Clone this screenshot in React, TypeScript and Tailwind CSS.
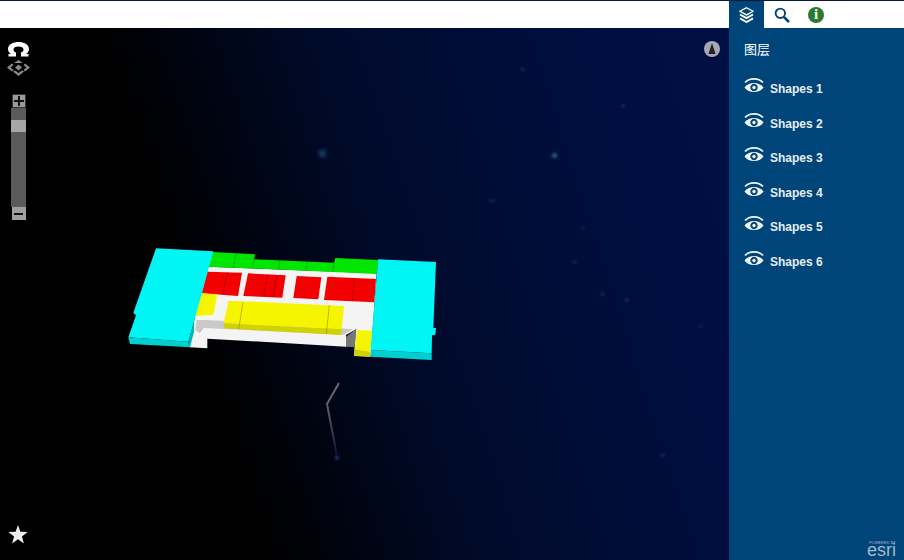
const layers = ["Shapes 1", "Shapes 2", "Shapes 3", "Shapes 4", "Shapes 5", "Shapes 6"];

function EyeIcon() {
  return (
    <svg width="20" height="15" viewBox="0 0 20 15" className="shrink-0">
      <path d="M1 4.500C5.500 -.3 14.500 -.3 19 4.500" fill="none" stroke="#f4f7fa" strokeWidth="1.600" />
      <path
        fillRule="evenodd"
        fill="#f4f7fa"
        d="M.5 9.500C4.500 3.500 15.500 3.500 19.500 9.500C15.500 15.500 4.500 15.500 .5 9.500ZM10 5.800a3.700 3.700 0 1 0 .01 0ZM10 7.800a1.700 1.700 0 1 1-.01 0Z"
      />
    </svg>
  );
}

function LayersIcon() {
  return (
    <svg width="15" height="16" viewBox="0 0 15 16">
      <path d="M7.500 .7 14 4.300 7.500 7.900 1 4.300Z" fill="none" stroke="#fff" strokeWidth="1.300" />
      <path d="M1 7.500 7.500 11.200 14 7.500" fill="none" stroke="#fff" strokeWidth="1.900" />
      <path d="M1 11.300 7.500 15 14 11.300" fill="none" stroke="#fff" strokeWidth="1.900" />
    </svg>
  );
}

function SearchIcon() {
  return (
    <svg width="16" height="16" viewBox="0 0 16 16">
      <circle cx="6.300" cy="6.300" r="4.700" fill="none" stroke="#00457a" strokeWidth="1.900" />
      <path d="M9.800 9.800 15 15" stroke="#00457a" strokeWidth="2.600" />
    </svg>
  );
}

function Building() {
  return (
    <svg width="330" height="130" viewBox="0 0 990 390" className="absolute left-[120px] top-[212px]">
      {/* floor slab */}
      <path d="M262 80 770 100 752 350 702 348 708 268 678 285 678 320 262 296 262 325 208 322 225 230 245 100Z" fill="#f4f4f4" />
      <path d="M250 240 320 243 700 268 670 284 250 264 240 280 226 270 230 240Z" fill="#c9c9c9" />
      <path d="M678 290 708 268 704 322 678 320Z" fill="#777" />
      {/* green row */}
      <path d="M278 36 405 43 402 58 642 68 646 54 774 60 770 102 640 96 264 80Z" fill="#00e600" />
      <path d="M348 40 340 82M405 43 397 84M480 62 476 88M562 66 558 92M642 68 638 96" stroke="#0a7a0a" strokeWidth="1.500" fill="none" />
      {/* red blocks */}
      <path d="M262 95 366 98 354 168 245 160Z" fill="#f30000" />
      <path d="M322 97 308 165" stroke="#8a0000" strokeWidth="1.500" />
      <path d="M384 100 497 106 487 173 370 168Z" fill="#f30000" />
      <path d="M443 104 431 170M470 106 460 172" stroke="#8a0000" strokeWidth="1.500" />
      <path d="M530 108 604 112 595 178 520 174Z" fill="#f30000" />
      <path d="M622 110 768 117 763 187 612 180Z" fill="#f30000" />
      <path d="M704 114 697 184" stroke="#8a0000" strokeWidth="1.500" />
      {/* yellow blocks */}
      <path d="M243 160 292 163 280 224 226 228Z" fill="#f5f500" />
      <path d="M326 182 672 198 665 268 311 250Z" fill="#f5f500" />
      <path d="M311 250 665 268 664 285 312 265Z" fill="#d2d200" />
      <path d="M369 186 356 268M628 196 619 282" stroke="#7a7a00" strokeWidth="1.500" fill="none" />
      <path d="M712 270 756 272 751 335 704 328Z" fill="#f5f500" />
      <path d="M704 328 751 335 751 350 702 347Z" fill="#d2d200" />
      {/* cyan wings */}
      <path d="M108 25 280 34 222 245 205 305 25 292 48 226 40 218Z" fill="#00f5f5" />
      <path d="M25 292 205 305 210 322 30 312Z" fill="#00cfcf" />
      <path d="M205 305 222 245 222 275 210 322Z" fill="#00b5b5" />
      <path d="M774 58 948 66 940 264 948 264 946 284 936 286 935 340 752 330Z" fill="#00f5f5" />
      <path d="M752 330 935 340 935 360 752 350Z" fill="#00cfcf" />
    </svg>
  );
}

export default function App() {
  return (
    <div className="flex h-[560px] w-[904px] flex-col overflow-hidden bg-black font-['Liberation_Sans',sans-serif]">
      <div className="flex h-[28px] shrink-0 border-t border-[#0a1a30] bg-white">
        <div className="flex-1" />
        <div className="flex w-[175px]">
          <div className="flex w-[35px] items-center justify-center bg-[#00457a]">
            <LayersIcon />
          </div>
          <div className="flex w-[36px] items-center justify-center">
            <SearchIcon />
          </div>
          <div className="flex w-[32px] items-center justify-center">
            <div className="flex h-[16px] w-[16px] items-center justify-center rounded-full bg-[#2a7a32] font-['Liberation_Serif',serif] text-[15px] font-bold text-white">
              i
            </div>
          </div>
        </div>
      </div>

      <div className="flex min-h-0 flex-1">
        {/* map */}
        <div className="relative flex-1 overflow-hidden bg-[linear-gradient(72deg,#000_0%,#000_30%,#000a2a_54%,#000e3e_80%,#001044_100%)]">
          {/* stars */}
          <div className="absolute left-[319px] top-[122px] h-[7px] w-[7px] rounded-full bg-[#1a4a74] blur-[2px]" />
          <div className="absolute left-[552px] top-[125px] h-[5px] w-[5px] rounded-full bg-[#2f6684] blur-[1.500px]" />
          <div className="absolute left-[521px] top-[39px] h-[5px] w-[3px] rounded-full bg-[#0a2650] blur-[1px]" />
          <div className="absolute left-[621px] top-[76px] h-[4px] w-[4px] rounded-full bg-[#0c2850] blur-[1px]" />
          <div className="absolute left-[488px] top-[171px] h-[3px] w-[9px] rounded-full bg-[#08204a] blur-[1px]" />
          <div className="absolute left-[581px] top-[198px] h-[4px] w-[4px] rounded-full bg-[#0a2248] blur-[1px]" />
          <div className="absolute left-[572px] top-[232px] h-[4px] w-[5px] rounded-full bg-[#0a2248] blur-[1px]" />
          <div className="absolute left-[600px] top-[264px] h-[4px] w-[5px] rounded-full bg-[#0c2850] blur-[1px]" />
          <div className="absolute left-[624px] top-[270px] h-[4px] w-[5px] rounded-full bg-[#0c2850] blur-[1px]" />
          <div className="absolute left-[698px] top-[297px] h-[3px] w-[5px] rounded-full bg-[#08204a] blur-[1px]" />
          <div className="absolute left-[660px] top-[425px] h-[4px] w-[5px] rounded-full bg-[#0c2850] blur-[1px]" />
          <div className="absolute left-[335px] top-[427px] h-[5px] w-[4px] rounded-full bg-[#1a3270] blur-[1px]" />

          <Building />

          <svg width="60" height="100" viewBox="0 0 60 100" className="absolute left-[300px] top-[342px] blur-[.5px]">
            <defs>
              <linearGradient id="streak" x1="0" y1="0" x2="0" y2="1">
                <stop offset="0" stopColor="#6a6a72" />
                <stop offset="0.4" stopColor="#55586a" />
                <stop offset="1" stopColor="#0a1230" />
              </linearGradient>
            </defs>
            <path d="M39 13 27 34 37 86" fill="none" stroke="url(#streak)" strokeWidth="2" />
          </svg>

          {/* navigation controls */}
          <div className="absolute left-[7px] top-[14px] flex flex-col items-center gap-[3px]">
            <svg width="23" height="15" viewBox="0 0 23 15">
              <path
                fillRule="evenodd"
                fill="#fff"
                d="M11.500 0C17 0 22 2.500 22 7C22 9.500 20.500 11 19 12L21.500 12 21.500 14.500 14 14.500 14 10.500C15.800 10 16.500 8.800 16.500 7.500C16.500 5.500 14.500 4.500 11.500 4.500C8.500 4.500 6.500 5.500 6.500 7.500C6.500 8.800 7.200 10 9 10.500L9 14.500 1.500 14.500 1.500 12 4 12C2.500 11 1 9.500 1 7C1 2.500 6 0 11.500 0Z"
              />
            </svg>
            <svg width="23" height="16" viewBox="0 0 23 16" fill="#8a8a8a">
              <path d="M11.500 0 16 3 7 3Z" />
              <path d="M5 3.500 6.500 5 3.500 7.500 6.500 10 5 11.500 0 7.500Z" />
              <path d="M18 3.500 16.500 5 19.500 7.500 16.500 10 18 11.500 23 7.500Z" />
              <path d="M11.500 4.500 15 7.500 11.500 10.500 8 7.500Z" />
              <path d="M6 11.500 11.500 16 17 11.500 15 10.500 11.500 13 8 10.500Z" />
            </svg>
          </div>

          {/* zoom slider */}
          <div className="absolute left-[11px] top-[66px] flex w-[15px] flex-col items-center">
            <div className="flex h-[14px] w-[14px] items-center justify-center border border-[#333] bg-[#9a9a9a]">
              <svg width="10" height="10" viewBox="0 0 10 10">
                <path d="M5 0V10M0 5H10" stroke="#111" strokeWidth="2" />
              </svg>
            </div>
            <div className="flex h-[99px] w-[15px] flex-col bg-[#5a5a5a] pt-[12px]">
              <div className="h-[12px] w-[15px] bg-[#a6a6a6]" />
            </div>
            <div className="flex h-[13px] w-[14px] items-center justify-center bg-[#a0a0a0]">
              <div className="h-[2px] w-[9px] bg-[#111]" />
            </div>
          </div>

          {/* compass */}
          <div className="absolute left-[704px] top-[13px] flex h-[16px] w-[16px] items-center justify-center rounded-full bg-[#a8a8b4]">
            <svg width="10" height="12" viewBox="0 0 10 12">
              <path d="M5 0 8.500 11 1.500 11Z" fill="#222" />
            </svg>
          </div>

          <span className="absolute bottom-[16px] left-[8px] text-[0px]">
            <svg width="20" height="19" viewBox="0 0 20 19">
              <path d="M10 0 12.400 6.800 19.600 7 13.900 11.400 15.900 18.400 10 14.300 4.100 18.400 6.100 11.400 .4 7 7.600 6.800Z" fill="#ededed" />
            </svg>
          </span>
        </div>

        {/* side panel */}
        <div className="relative flex w-[175px] shrink-0 flex-col bg-[#00457a] pl-[15px] pt-[13px]">
          <div className="font-['Noto_Sans_CJK_SC',sans-serif] text-[13px] leading-[16px] text-white">图层</div>
          <div className="mt-[17px] flex flex-col">
            {layers.map((name) => (
              <div key={name} className="flex h-[34.500px] items-start gap-[6px] pt-[4px]">
                <EyeIcon />
                <span className="mt-[3px] text-[12px] font-bold leading-[16px] text-[#e6edf2]">{name}</span>
              </div>
            ))}
          </div>
          <div className="absolute bottom-[4px] right-[8px] flex flex-col items-end text-[#a3b8ca]">
            <span className="text-[4px] leading-[4px]">POWERED BY</span>
            <span className="text-[18px] leading-[11px]">esri</span>
          </div>
        </div>
      </div>
    </div>
  );
}
